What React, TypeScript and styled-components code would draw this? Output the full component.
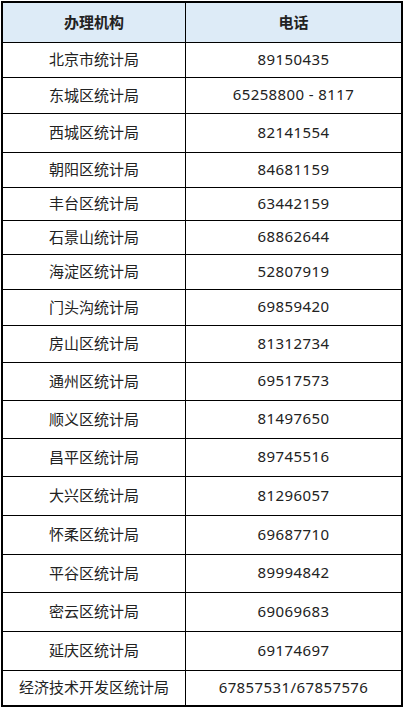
import React from "react";
import styled, { createGlobalStyle } from "styled-components";

const Global = createGlobalStyle`
  html, body { margin: 0; padding: 0; background: #ffffff; }
  body { font-family: "Noto Sans", "Noto Sans CJK SC", sans-serif; }
`;

const Table = styled.div`
  margin: 1px 0 0 1px;
  width: 402px;
  box-sizing: border-box;
  border: 2px solid #000;
  display: flex;
  flex-direction: column;
`;

const Row = styled.div<{ $h: number; $head?: boolean }>`
  display: grid;
  grid-template-columns: 182px 1fr;
  box-sizing: border-box;
  height: ${(p) => p.$h}px;
  border-top: ${(p) => (p.$head ? "none" : "1px solid #000")};
  background: ${(p) => (p.$head ? "#ddebf7" : "#ffffff")};
`;

const Cell = styled.div<{ $head?: boolean; $right?: boolean }>`
  display: flex;
  align-items: center;
  justify-content: center;
  padding-bottom: 3px;
  box-sizing: border-box;
  border-left: ${(p) => (p.$right ? "1px solid #000" : "none")};
  font-size: 15px;
  letter-spacing: ${(p) => (p.$right && !p.$head ? "0.4px" : "0")};
  font-weight: ${(p) => (p.$head ? 700 : 400)};
  color: #222;
  white-space: nowrap;
`;

const rows: [string, string, number][] = [
  ["北京市统计局", "89150435", 35],
  ["东城区统计局", "65258800 - 8117", 36],
  ["西城区统计局", "82141554", 39],
  ["朝阳区统计局", "84681159", 35],
  ["丰台区统计局", "63442159", 33],
  ["石景山统计局", "68862644", 34],
  ["海淀区统计局", "52807919", 35],
  ["门头沟统计局", "69859420", 36],
  ["房山区统计局", "81312734", 37],
  ["通州区统计局", "69517573", 38],
  ["顺义区统计局", "81497650", 38],
  ["昌平区统计局", "89745516", 38],
  ["大兴区统计局", "81296057", 39],
  ["怀柔区统计局", "69687710", 39],
  ["平谷区统计局", "89994842", 38],
  ["密云区统计局", "69069683", 39],
  ["延庆区统计局", "69174697", 39],
  ["经济技术开发区统计局", "67857531/67857576", 35],
];

export default function App() {
  return (
    <>
      <Global />
      <Table>
        <Row $h={39} $head>
          <Cell $head>办理机构</Cell>
          <Cell $head $right>电话</Cell>
        </Row>
        {rows.map(([name, phone, h]) => (
          <Row key={name} $h={h}>
            <Cell>{name}</Cell>
            <Cell $right>{phone}</Cell>
          </Row>
        ))}
      </Table>
    </>
  );
}
